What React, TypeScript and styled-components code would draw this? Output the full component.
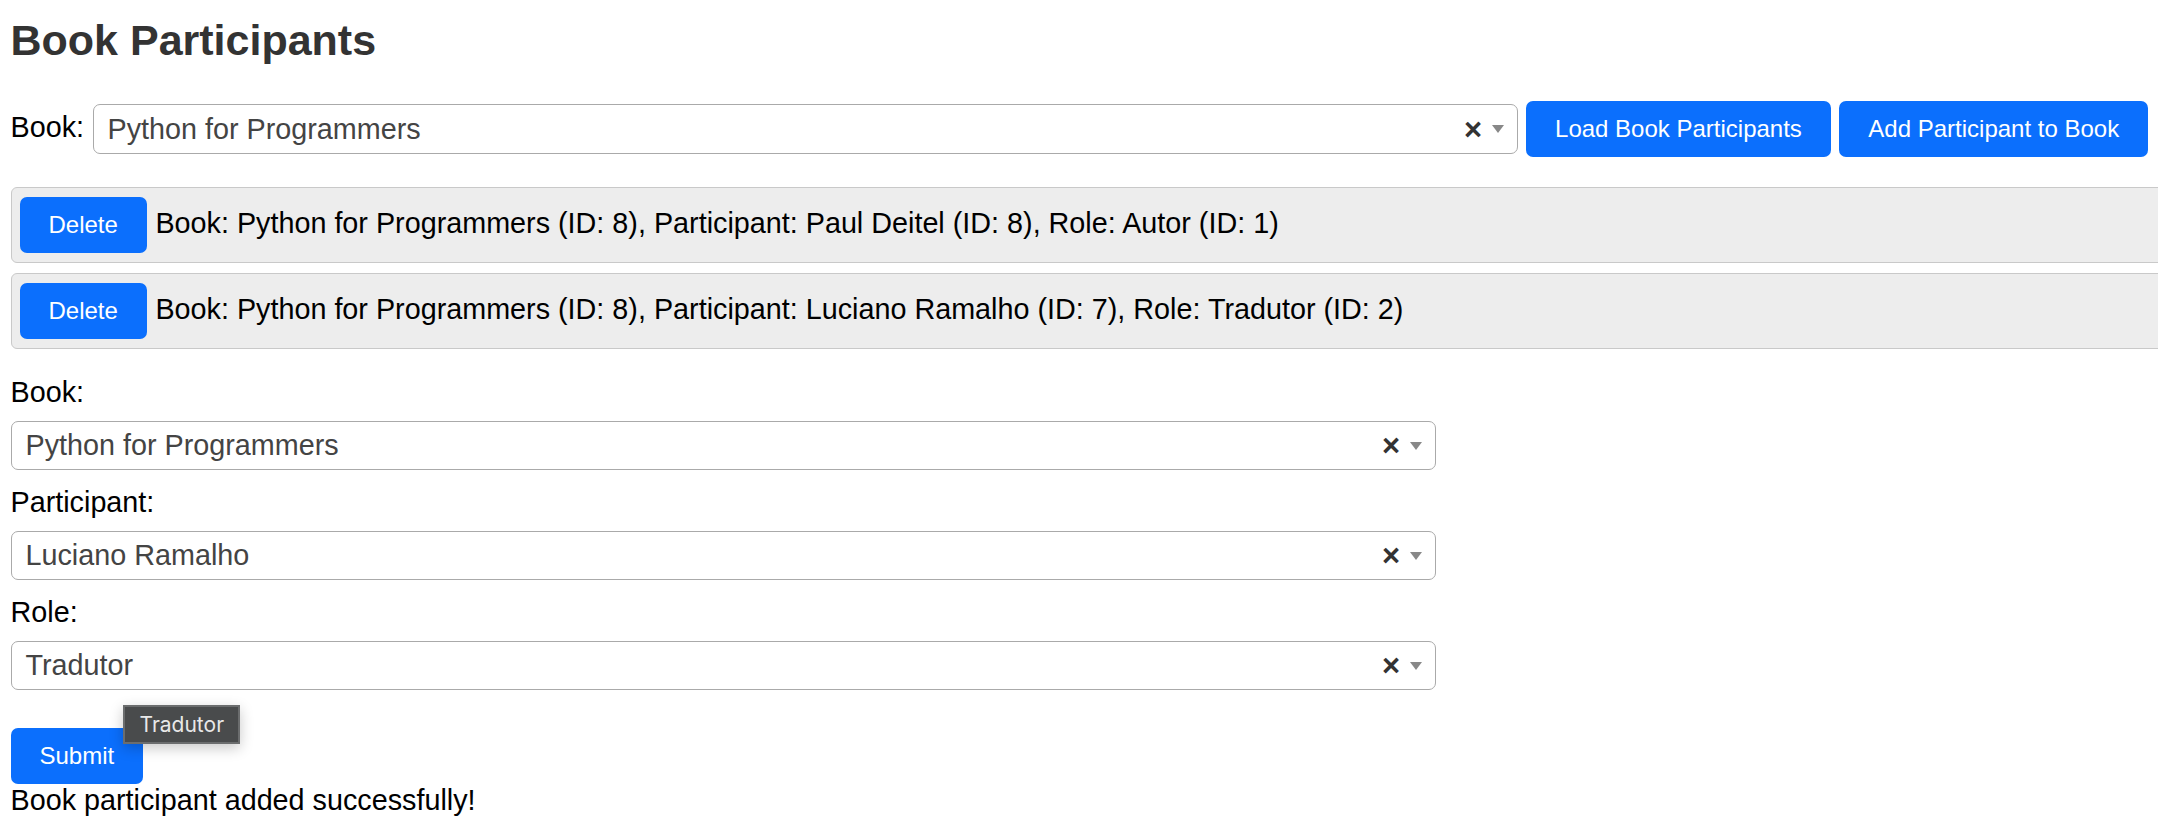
import React, {FC} from "react";
import styled, {createGlobalStyle} from "styled-components";

type Participation = {
    id: number
    book: string
    bookId: number
    participant: string
    participantId: number
    role: string
    roleId: number
}

const participations: Participation[] = [
    {id: 1, book: "Python for Programmers", bookId: 8, participant: "Paul Deitel", participantId: 8, role: "Autor", roleId: 1},
    {id: 2, book: "Python for Programmers", bookId: 8, participant: "Luciano Ramalho", participantId: 7, role: "Tradutor", roleId: 2},
]

const GlobalStyle = createGlobalStyle`
  html, body {
    margin: 0;
    padding: 0;
    background: #fff;
    overflow: hidden;
  }
  body {
    font-family: "Liberation Sans", Arial, Helvetica, sans-serif;
    font-size: 28.75px;
    color: #000;
  }
`

const Page = styled.div`
  padding: 0 0 0 10.5px;
`

const Title = styled.h2`
  margin: 15px 0 0;
  font-size: 43px;
  line-height: 50px;
  font-weight: bold;
  color: #333;
`

const Toolbar = styled.div`
  display: flex;
  align-items: center;
  gap: 8.5px;
  margin-top: 36px;
`

const InlineLabel = styled.label`
  line-height: 33px;
  margin-bottom: 4px;
`

const Button = styled.button`
  flex: none;
  padding: 14px 29px;
  border: none;
  border-radius: 7px;
  background: #0b6ffd;
  color: #fff;
  font-family: "Liberation Sans", Arial, Helvetica, sans-serif;
  font-size: 24px;
  line-height: 28px;
  white-space: nowrap;
  cursor: pointer;
`

const SelectBox = styled.div<{$height: number}>`
  flex: none;
  box-sizing: border-box;
  display: flex;
  align-items: center;
  width: 1425px;
  height: ${p => p.$height}px;
  border: 1px solid #aaa;
  border-radius: 7px;
  background: #fff;
`

const SelectValue = styled.span`
  flex: 1;
  padding-left: 14px;
  color: #444;
  line-height: 33px;
  white-space: nowrap;
  overflow: hidden;
`

const ClearMark = styled.span`
  margin-right: 10px;
  font-size: 31px;
  font-weight: bold;
  line-height: 1;
  color: #333;
`

const Caret = styled.span`
  width: 0;
  height: 0;
  margin-right: 12.5px;
  border-left: 6px solid transparent;
  border-right: 6px solid transparent;
  border-top: 8px solid #888;
`

const List = styled.div`
  margin-top: 30px;
  display: flex;
  flex-direction: column;
  gap: 10px;
`

const ParticipantRow = styled.div`
  box-sizing: content-box;
  width: 100%;
  display: flex;
  align-items: baseline;
  gap: 8.5px;
  padding: 9px 8px;
  border: 1px solid #c9c9c9;
  border-radius: 6px;
  background: #ededed;
`

const RowText = styled.span`
  line-height: 33px;
  white-space: nowrap;
`

const Form = styled.form`
  margin-top: 27px;
`

const Field = styled.div`
  margin-bottom: 16px;
`

const FieldLabel = styled.label`
  display: block;
  line-height: 33px;
  margin-bottom: 12px;
`

const SubmitRow = styled.div`
  position: relative;
  margin-top: 37.5px;
`

const Tooltip = styled.div`
  position: absolute;
  left: 112.8px;
  top: -22.3px;
  box-sizing: border-box;
  width: 117px;
  height: 39px;
  border: 2px solid #6b6d6e;
  background: #494b4c;
  color: #e8e8e8;
  font-family: Inter, "Liberation Sans", sans-serif;
  font-size: 21px;
  line-height: 35px;
  text-align: center;
  box-shadow: 0 4px 14px rgba(0, 0, 0, 0.22);
`

const Message = styled.div`
  line-height: 33px;
`

const Select: FC<{value: string, height: number}> = ({value, height}) => (
    <SelectBox $height={height}>
        <SelectValue>{value}</SelectValue>
        <ClearMark>×</ClearMark>
        <Caret/>
    </SelectBox>
)

const App: FC = () => {
    return (
        <Page>
            <GlobalStyle/>
            <Title>Book Participants</Title>
            <Toolbar>
                <InlineLabel>Book:</InlineLabel>
                <Select value={"Python for Programmers"} height={50}/>
                <Button type="button">Load Book Participants</Button>
                <Button type="button">Add Participant to Book</Button>
            </Toolbar>
            <List>
                {participations.map(p => (
                    <ParticipantRow key={p.id}>
                        <Button type="button">Delete</Button>
                        <RowText>
                            Book: {p.book} (ID: {p.bookId}), Participant: {p.participant} (ID: {p.participantId}), Role: {p.role} (ID: {p.roleId})
                        </RowText>
                    </ParticipantRow>
                ))}
            </List>
            <Form onSubmit={e => e.preventDefault()}>
                <Field>
                    <FieldLabel>Book:</FieldLabel>
                    <Select value={"Python for Programmers"} height={49}/>
                </Field>
                <Field>
                    <FieldLabel>Participant:</FieldLabel>
                    <Select value={"Luciano Ramalho"} height={49}/>
                </Field>
                <Field>
                    <FieldLabel>Role:</FieldLabel>
                    <Select value={"Tradutor"} height={49}/>
                </Field>
                <SubmitRow>
                    <Button type="submit">Submit</Button>
                    <Tooltip>Tradutor</Tooltip>
                </SubmitRow>
                <Message>Book participant added successfully!</Message>
            </Form>
        </Page>
    )
}

export default App
